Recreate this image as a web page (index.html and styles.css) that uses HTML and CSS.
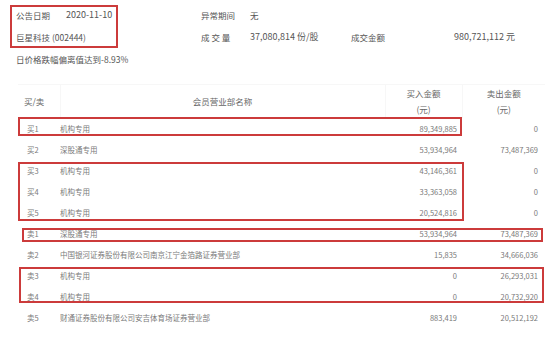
FILE: index.html
```html
<!DOCTYPE html>
<html lang="zh">
<head>
<meta charset="utf-8">
<link rel="stylesheet" href="styles.css">
</head>
<body>
<div class="page">
  <div class="info">
    <span>公告日期</span><span class="num">2020-11-10</span>
    <span>异常期间</span><span>无</span><span></span><span></span>
    <span class="span2">巨星科技 (002444)</span>
    <span>成 交 量</span><span class="num wide">37,080,814 份/股</span><span class="ll">成交金额</span><span class="num">980,721,112 元</span>
    <span class="span6">日价格跌幅偏离值达到-8.93%</span>
  </div>

  <table class="grid">
    <colgroup><col class="c1"><col class="c2"><col class="c3"><col class="c4"></colgroup>
    <thead>
      <tr><th class="side">买/卖</th><th>会员营业部名称</th><th>买入金额<br>(元)</th><th>卖出金额<br>(元)</th></tr>
    </thead>
    <tbody>
      <tr><td class="side">买1</td><td>机构专用</td><td class="amt">89,349,885</td><td class="amt">0</td></tr>
      <tr><td class="side">买2</td><td>深股通专用</td><td class="amt">53,934,964</td><td class="amt">73,487,369</td></tr>
      <tr><td class="side">买3</td><td>机构专用</td><td class="amt">43,146,361</td><td class="amt">0</td></tr>
      <tr><td class="side">买4</td><td>机构专用</td><td class="amt">33,363,058</td><td class="amt">0</td></tr>
      <tr><td class="side">买5</td><td>机构专用</td><td class="amt">20,524,816</td><td class="amt">0</td></tr>
      <tr><td class="side">卖1</td><td>深股通专用</td><td class="amt">53,934,964</td><td class="amt">73,487,369</td></tr>
      <tr><td class="side">卖2</td><td>中国银河证券股份有限公司南京江宁金箔路证券营业部</td><td class="amt">15,835</td><td class="amt">34,666,036</td></tr>
      <tr><td class="side">卖3</td><td>机构专用</td><td class="amt">0</td><td class="amt">26,293,031</td></tr>
      <tr><td class="side">卖4</td><td>机构专用</td><td class="amt">0</td><td class="amt">20,732,920</td></tr>
      <tr><td class="side">卖5</td><td>财通证券股份有限公司安吉体育场证券营业部</td><td class="amt">883,419</td><td class="amt">20,512,192</td></tr>
    </tbody>
  </table>

  <div class="mark m-top"></div>
  <div class="mark m-b1"></div>
  <div class="mark m-b35"></div>
  <div class="mark m-s1"></div>
  <div class="mark m-s34"></div>
</div>
</body>
</html>
```

FILE: styles.css
```css
* { box-sizing: border-box; }
html, body {
  margin: 0;
  padding: 0;
  background: #ffffff;
}
body {
  font-family: "Noto Sans CJK SC", "Noto Sans", sans-serif;
  width: 550px;
  height: 341px;
  overflow: hidden;
}
.page {
  position: relative;
  width: 550px;
  height: 341px;
}
.info {
  display: grid;
  grid-template-columns: 50px 135px 49px 101px 103px auto;
  padding: 4px 0 0 16px;
  line-height: 22px;
  font-size: 8.5px;
  color: #555555;
  white-space: nowrap;
}
.info .num { font-size: 9px; }
.span2 { grid-column: span 2; }
.span6 { grid-column: span 6; }

.grid {
  margin: 14px 0 0 18px;
  width: 527px;
  table-layout: fixed;
  border-collapse: collapse;
}
.c1 { width: 42px; }
.c2 { width: 325px; }
.c3 { width: 77px; }
.c4 { width: 83px; }

.grid th {
  height: 33px;
  font-weight: normal;
  font-size: 8.5px;
  line-height: 16px;
  color: #666666;
  text-align: center;
  padding: 0;
  border-left: 1px solid #f7f7f7;
  border-top: 1px solid #f7f7f7;
}
.grid th:first-child { border-left: none; }
.grid th.side {
  text-align: left;
  padding-left: 6px;
}
.grid td {
  height: 21px;
  padding: 0;
  font-size: 7.5px;
  color: #7a7a7a;
  white-space: nowrap;
  overflow: hidden;
}
.grid td.side { padding-left: 9px; }
.grid td.amt {
  text-align: right;
  padding-right: 5px;
}
.grid td.amt:last-child { padding-right: 7px; }

.mark {
  position: absolute;
  border: 2px solid #cc3b3b;
}
.m-top { left: 10px; top: 5px; width: 108px; height: 43px; }
.m-b1 { left: 18px; top: 117px; width: 444px; height: 19px; }
.m-b35 { left: 18px; top: 162px; width: 446px; height: 59px; }
.m-s1 { left: 22px; top: 228px; width: 521px; height: 14px; }
.m-s34 { left: 19px; top: 267px; width: 525px; height: 36px; }
```
